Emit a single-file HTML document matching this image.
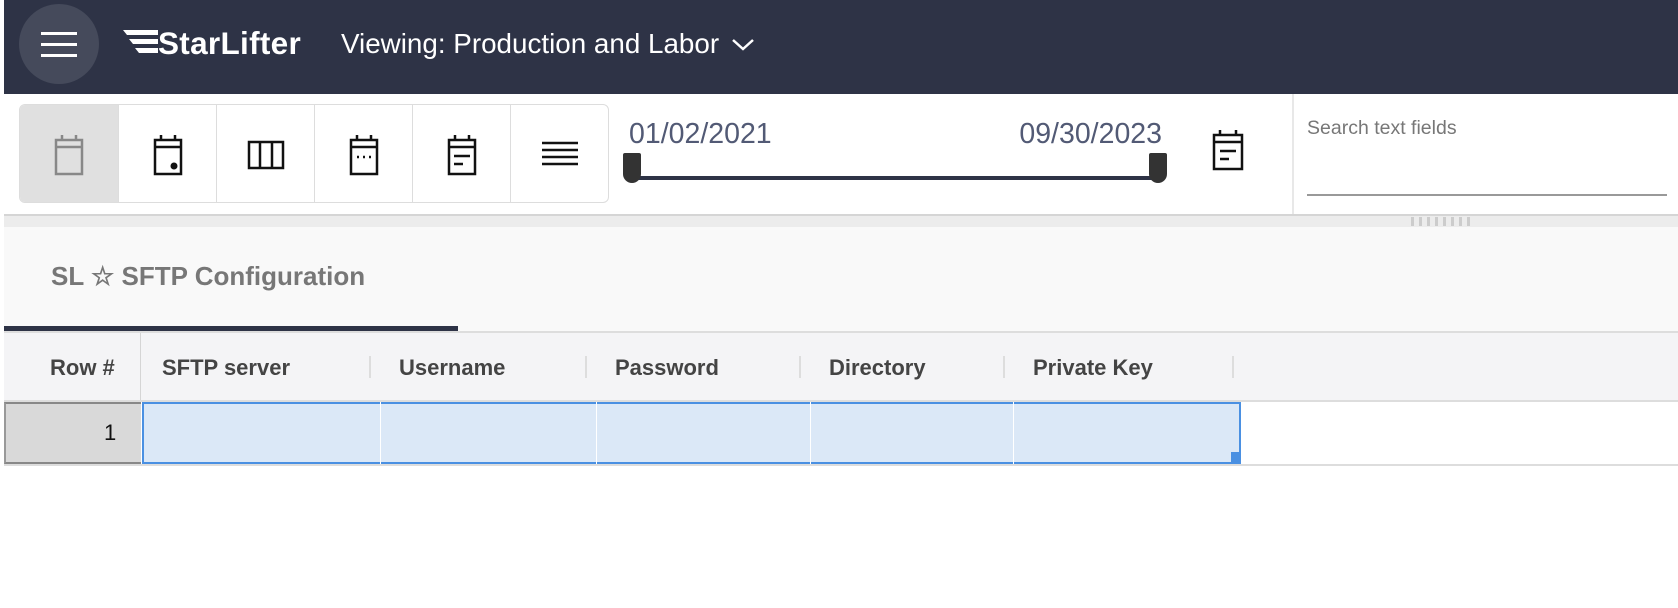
<!DOCTYPE html>
<html><head><meta charset="utf-8"><style>
*{margin:0;padding:0;box-sizing:border-box}
body{width:1678px;height:608px;background:#fff;font-family:"Liberation Sans",Arial,sans-serif;position:relative;overflow:hidden}
.a{position:absolute}
.hdr{left:4px;top:0;width:1674px;height:94px;background:#2e3346}
.btn{position:absolute;top:105px;width:98px;height:97px;border-left:1px solid #ddd;display:flex;align-items:center;justify-content:center}
.th{position:absolute;top:355px;font-size:22px;font-weight:bold;color:#444}
.sep{position:absolute;top:356px;width:2px;height:22px;background:#ddd}
.cl{position:absolute;top:402px;width:1px;height:62px;background:#fff}
</style></head><body>
<div class="a hdr"></div>
<div class="a" style="left:19px;top:4px;width:80px;height:80px;border-radius:50%;background:#454a5b"></div>
<div class="a" style="left:41px;top:32px;width:36px;height:3px;background:#fff"></div>
<div class="a" style="left:41px;top:43px;width:36px;height:3px;background:#fff"></div>
<div class="a" style="left:41px;top:54px;width:36px;height:3px;background:#fff"></div>
<svg class="a" style="left:123px;top:30px" width="36" height="24"><polygon points="0,0 35,0 35,5 4,5" fill="#fff"/><polygon points="6,9 35,9 35,14 10,14" fill="#fff"/><polygon points="12,18 35,18 35,23 16,23" fill="#fff"/></svg>
<div class="a" style="left:158px;top:25px;font-size:31.5px;font-weight:bold;color:#fff;letter-spacing:0.3px">StarLifter</div>
<div class="a" style="left:341px;top:28px;font-size:27.8px;color:#fff">Viewing: Production and Labor</div>
<svg class="a" style="left:731px;top:38px" width="24" height="14"><path d="M2 2 L12 11 L22 2" stroke="#fff" stroke-width="2.5" fill="none"/></svg>

<div class="a" style="left:19px;top:104px;width:590px;height:99px;border:1px solid #ddd;border-radius:6px;background:#fff;overflow:hidden">
<div style="position:absolute;left:0;top:0;width:98px;height:99px;background:#e0e0e0"></div></div>
<div class="btn" style="left:20px;border:0"><svg width="36" height="44"><path d="M5 8h26v34H5z M5 15h26 M11 3v5 M25 3v5" stroke="#888" stroke-width="2.5" fill="none"/></svg></div>
<div class="btn" style="left:118px"><svg width="36" height="44"><path d="M5 8h26v34H5z M5 15h26 M11 3v5 M25 3v5" stroke="#111" stroke-width="2.5" fill="none"/><circle cx="24" cy="34" r="3.5" fill="#111"/></svg></div>
<div class="btn" style="left:216px"><svg width="42" height="42"><path d="M4 9h34v26H4z M15 9v26 M27 9v26" stroke="#111" stroke-width="2.5" fill="none"/></svg></div>
<div class="btn" style="left:314px"><svg width="36" height="44"><path d="M5 8h26v34H5z M5 15h26 M11 3v5 M25 3v5" stroke="#111" stroke-width="2.5" fill="none"/><path d="M11 25h2 M17 25h2 M23 25h2" stroke="#111" stroke-width="2.5"/></svg></div>
<div class="btn" style="left:412px"><svg width="36" height="44"><path d="M5 8h26v34H5z M5 15h26 M11 3v5 M25 3v5 M10 24h16 M10 32h9" stroke="#111" stroke-width="2.5" fill="none"/></svg></div>
<div class="btn" style="left:510px"><svg width="42" height="42"><path d="M3 10h36 M3 17h36 M3 24h36 M3 31h36" stroke="#111" stroke-width="2.5"/></svg></div>

<div class="a" style="left:629px;top:118px;font-size:28.5px;color:#525a75">01/02/2021</div>
<div class="a" style="left:1010px;top:118px;font-size:28.5px;color:#525a75;width:152px;text-align:right;white-space:nowrap;direction:rtl">09/30/2023</div>
<div class="a" style="left:631px;top:176px;width:527px;height:4px;background:#2e3346"></div>
<div class="a" style="left:623px;top:153px;width:18px;height:30px;background:#333;border-radius:2px 2px 9px 9px"></div>
<div class="a" style="left:1149px;top:153px;width:18px;height:30px;background:#333;border-radius:2px 2px 9px 9px"></div>
<svg class="a" style="left:1209px;top:127px" width="38" height="44"><path d="M5 8h28v34H5z M5 15h28 M11 3v5 M27 3v5 M11 24h16 M11 32h9" stroke="#111" stroke-width="2.5" fill="none"/></svg>
<div class="a" style="left:1292px;top:94px;width:2px;height:120px;background:#e8e8e8"></div>
<div class="a" style="left:1307px;top:117px;font-size:19.5px;color:#777">Search text fields</div>
<div class="a" style="left:1307px;top:194px;width:360px;height:2px;background:#999"></div>

<div class="a" style="left:4px;top:214px;width:1674px;height:13px;background:#ececec;border-top:2px solid #d5d5d5"></div>
<div class="a" style="left:1411px;top:217px;width:59px;height:9px;background:repeating-linear-gradient(90deg,#ccc 0 3px,transparent 3px 8px)"></div>
<div class="a" style="left:4px;top:227px;width:1674px;height:105px;background:#f9f9f9"></div>
<div class="a" style="left:51px;top:261px;font-size:26px;font-weight:bold;color:#777">SL ☆ SFTP Configuration</div>
<div class="a" style="left:4px;top:326px;width:454px;height:5px;background:#2e3346"></div>
<div class="a" style="left:4px;top:331px;width:1674px;height:2px;background:#ddd"></div>

<div class="a" style="left:4px;top:333px;width:1674px;height:67px;background:#f4f4f6"></div>
<div class="a" style="left:140px;top:333px;width:1px;height:68px;background:#d5d5d5"></div>
<div class="a" style="left:4px;top:400px;width:1674px;height:2px;background:#ddd"></div>
<div class="th" style="left:50px">Row #</div>
<div class="th" style="left:162px">SFTP server</div><div class="sep" style="left:369px"></div>
<div class="th" style="left:399px">Username</div><div class="sep" style="left:585px"></div>
<div class="th" style="left:615px">Password</div><div class="sep" style="left:799px"></div>
<div class="th" style="left:829px">Directory</div><div class="sep" style="left:1003px"></div>
<div class="th" style="left:1033px">Private Key</div><div class="sep" style="left:1232px"></div>

<div class="a" style="left:4px;top:402px;width:137px;height:62px;background:#d9d9d9;border-top:2px solid #888;border-bottom:2px solid #888;border-left:2px solid #999"></div>
<div class="a" style="left:104px;top:420px;font-size:22px;color:#111">1</div>
<div class="a" style="left:142px;top:402px;width:1099px;height:62px;background:#dbe8f7;border:2px solid #4a90e2"></div>
<div class="cl" style="left:380px"></div><div class="cl" style="left:596px"></div><div class="cl" style="left:810px"></div><div class="cl" style="left:1013px"></div>
<div class="a" style="left:1231px;top:452px;width:10px;height:12px;background:#4a90e2"></div>
<div class="a" style="left:4px;top:464px;width:1674px;height:2px;background:#ddd"></div>
</body></html>
